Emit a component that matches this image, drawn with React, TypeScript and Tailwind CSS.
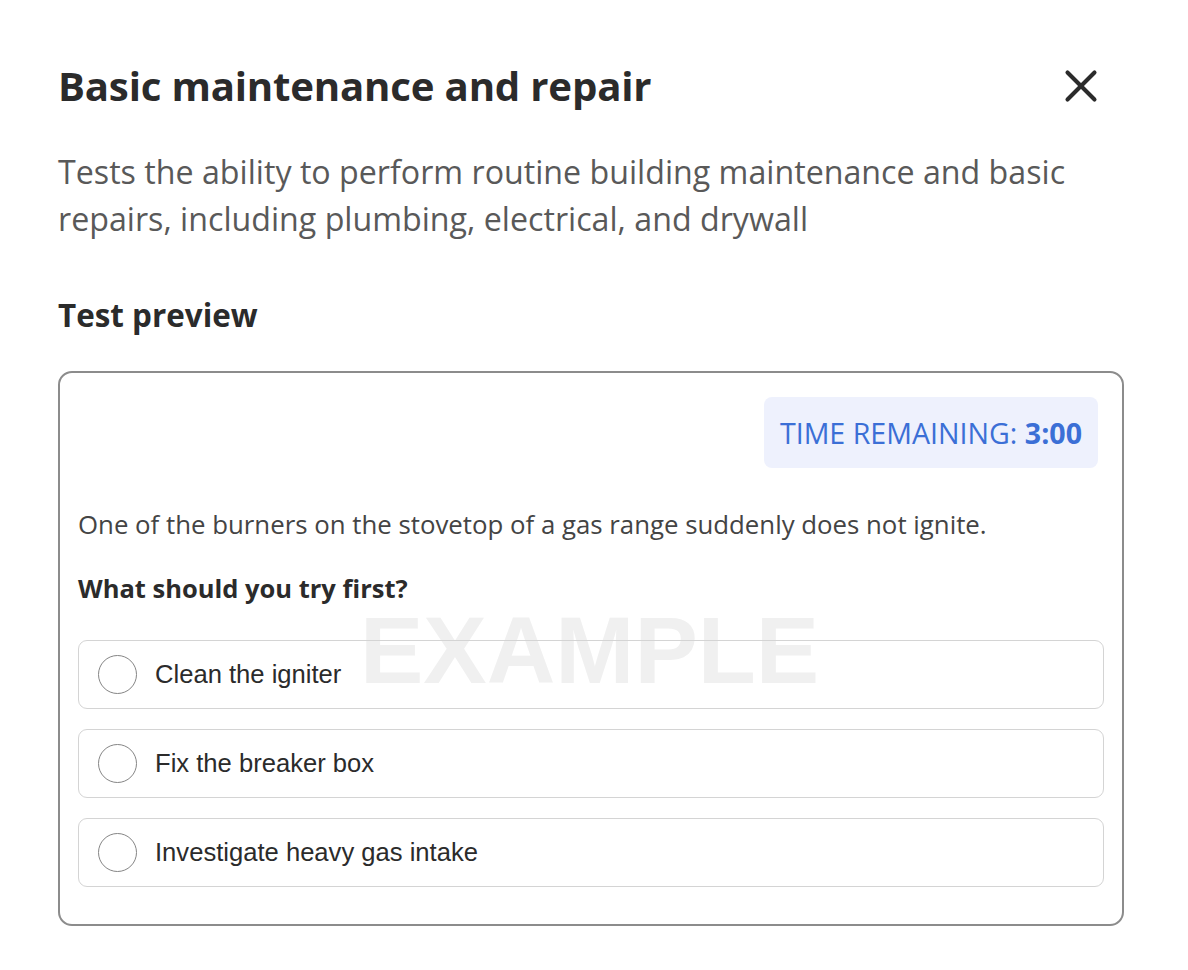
import { X } from "lucide-react"

const options = ["Clean the igniter", "Fix the breaker box", "Investigate heavy gas intake"]

export default function App() {
  return (
    <div className="min-h-[970px] bg-white pl-[58px] pr-[64px] pt-[58px] font-['Open_Sans',sans-serif]">
      {/* header */}
      <div className="flex items-start justify-between">
        <h1 className="text-[40.2px] font-bold leading-[56px] tracking-[-0.2px] text-[#2b2b2b]">Basic maintenance and repair</h1>
        <button className="mr-[16px] mt-[1px] text-[#2b2b2b]">
          <X size={54} strokeWidth={1.8} />
        </button>
      </div>
      <p className="mt-[34px] pr-[20px] text-[32.2px] leading-[47px] text-[#595959]">
        Tests the ability to perform routine building maintenance and basic repairs, including plumbing, electrical,
        and drywall
      </p>
      <h2 className="mt-[53px] text-[31.4px] font-bold leading-[40px] text-[#2b2b2b]">Test preview</h2>

      {/* preview card */}
      <div className="relative mt-[36px] rounded-[14px] border-2 border-[#8c8c8c] px-[18px] pb-[37px] pt-[24px]">
        <div className="flex justify-end pr-[6px]">
          <div className="rounded-[8px] bg-[#eef1fd] px-[16px] py-[15px] text-[28.6px] leading-[41px] text-[#3b6fd6]">
            TIME REMAINING: <span className="font-bold">3:00</span>
          </div>
        </div>
        <p className="mt-[38px] text-[25.8px] leading-[36px] text-[#444444]">
          One of the burners on the stovetop of a gas range suddenly does not ignite.
        </p>
        <p className="mt-[28px] text-[25.5px] font-bold leading-[36px] text-[#2b2b2b]">What should you try first?</p>

        <div className="relative mt-[34px]">
          <div className="pointer-events-none absolute left-[282px] top-[-37px] select-none font-['Liberation_Sans',Arial,sans-serif] text-[95px] font-bold leading-none text-[#f0f0f0]">
            EXAMPLE
          </div>
          <div className="relative flex flex-col gap-[20px]">
            {options.map((o) => (
              <label
                key={o}
                className="flex h-[69px] items-center gap-[18px] rounded-[9px] border-[1.5px] border-[#d4d4d4] px-[19px]"
              >
                <span className="h-[39px] w-[39px] shrink-0 rounded-full border-[1.7px] border-[#858585]" />
                <span className="font-['Liberation_Sans',Arial,sans-serif] text-[25.6px] text-[#2b2b2b]">{o}</span>
              </label>
            ))}
          </div>
        </div>
      </div>
    </div>
  )
}
